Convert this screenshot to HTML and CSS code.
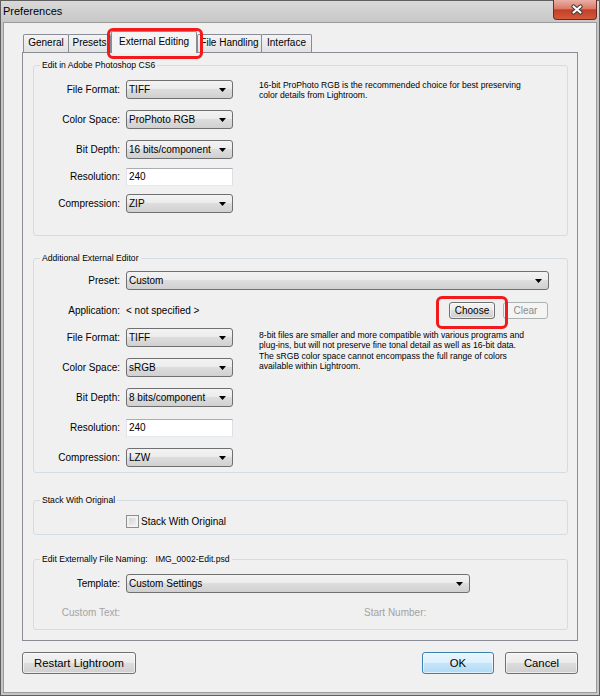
FILE: index.html
```
<!DOCTYPE html>
<html>
<head>
<meta charset="utf-8">
<title>Preferences</title>
<link rel="stylesheet" href="styles.css">
</head>
<body>
<div class="window">
  <div class="titlebar">
    <span class="title">Preferences</span>
    <div class="close-btn">
      <svg width="14" height="11" viewBox="0 0 14 11"><path d="M3.5 2.5 L10.5 8.5 M10.5 2.5 L3.5 8.5" stroke="#3b3b3b" stroke-width="4.2" stroke-linecap="round"/><path d="M3.5 2.5 L10.5 8.5 M10.5 2.5 L3.5 8.5" stroke="#ffffff" stroke-width="2.2" stroke-linecap="round"/></svg>
    </div>
  </div>
  <div class="client">
    <div class="tabs">
      <div class="tab t-general">General</div>
      <div class="tab t-presets">Presets</div>
      <div class="tab active t-external">External Editing<span class="mark mark-tab"></span></div>
      <div class="tab t-files">File Handling</div>
      <div class="tab t-interface">Interface</div>
    </div>
    <div class="panel">
      <fieldset class="group g-photoshop">
        <legend>Edit in Adobe Photoshop CS6</legend>
        <div class="cols">
          <div class="fields">
            <div class="row"><span class="lbl">File Format:</span><div class="select"><span class="val">TIFF</span><svg class="arrow" width="7" height="4" viewBox="0 0 7 4"><path d="M0 0 H7 L3.5 4 Z" fill="#000"/></svg></div></div>
            <div class="row"><span class="lbl">Color Space:</span><div class="select"><span class="val">ProPhoto RGB</span><svg class="arrow" width="7" height="4" viewBox="0 0 7 4"><path d="M0 0 H7 L3.5 4 Z" fill="#000"/></svg></div></div>
            <div class="row"><span class="lbl">Bit Depth:</span><div class="select"><span class="val">16 bits/component</span><svg class="arrow" width="7" height="4" viewBox="0 0 7 4"><path d="M0 0 H7 L3.5 4 Z" fill="#000"/></svg></div></div>
            <div class="row tight"><span class="lbl">Resolution:</span><div class="text-input">240</div></div>
            <div class="row tight"><span class="lbl">Compression:</span><div class="select"><span class="val">ZIP</span><svg class="arrow" width="7" height="4" viewBox="0 0 7 4"><path d="M0 0 H7 L3.5 4 Z" fill="#000"/></svg></div></div>
          </div>
          <p class="desc">16-bit ProPhoto RGB is the recommended choice for best preserving<br>color details from Lightroom.</p>
        </div>
      </fieldset>

      <fieldset class="group g-additional">
        <legend>Additional External Editor</legend>
        <div class="row"><span class="lbl">Preset:</span><div class="select preset"><span class="val">Custom</span><svg class="arrow" width="7" height="4" viewBox="0 0 7 4"><path d="M0 0 H7 L3.5 4 Z" fill="#000"/></svg></div></div>
        <div class="row app-row">
          <span class="lbl">Application:</span>
          <span class="app-value">&lt; not specified &gt;</span>
          <button class="btn btn-sm choose">Choose<span class="mark mark-choose"></span></button>
          <button class="btn btn-sm clear" disabled>Clear</button>
        </div>
        <div class="cols cols-2">
          <div class="fields">
            <div class="row"><span class="lbl">File Format:</span><div class="select"><span class="val">TIFF</span><svg class="arrow" width="7" height="4" viewBox="0 0 7 4"><path d="M0 0 H7 L3.5 4 Z" fill="#000"/></svg></div></div>
            <div class="row"><span class="lbl">Color Space:</span><div class="select"><span class="val">sRGB</span><svg class="arrow" width="7" height="4" viewBox="0 0 7 4"><path d="M0 0 H7 L3.5 4 Z" fill="#000"/></svg></div></div>
            <div class="row"><span class="lbl">Bit Depth:</span><div class="select"><span class="val">8 bits/component</span><svg class="arrow" width="7" height="4" viewBox="0 0 7 4"><path d="M0 0 H7 L3.5 4 Z" fill="#000"/></svg></div></div>
            <div class="row"><span class="lbl">Resolution:</span><div class="text-input">240</div></div>
            <div class="row"><span class="lbl">Compression:</span><div class="select"><span class="val">LZW</span><svg class="arrow" width="7" height="4" viewBox="0 0 7 4"><path d="M0 0 H7 L3.5 4 Z" fill="#000"/></svg></div></div>
          </div>
          <p class="desc desc-2">8-bit files are smaller and more compatible with various programs and<br>plug-ins, but will not preserve fine tonal detail as well as 16-bit data.<br>The sRGB color space cannot encompass the full range of colors<br>available within Lightroom.</p>
        </div>
      </fieldset>

      <fieldset class="group g-stack">
        <legend>Stack With Original</legend>
        <div class="check-row"><span class="checkbox"></span><span class="check-lbl">Stack With Original</span></div>
      </fieldset>

      <fieldset class="group g-naming">
        <legend>Edit Externally File Naming:<span class="fname">IMG_0002-Edit.psd</span></legend>
        <div class="row"><span class="lbl">Template:</span><div class="select template"><span class="val">Custom Settings</span><svg class="arrow" width="7" height="4" viewBox="0 0 7 4"><path d="M0 0 H7 L3.5 4 Z" fill="#000"/></svg></div></div>
        <div class="disabled-row"><span class="lbl">Custom Text:</span><span class="start-lbl">Start Number:</span></div>
      </fieldset>
    </div>
    <div class="footer">
      <button class="btn btn-lg restart">Restart Lightroom</button>
      <button class="btn btn-lg ok">OK</button>
      <button class="btn btn-lg cancel">Cancel</button>
    </div>
  </div>
</div>
</body>
</html>
```

FILE: styles.css
```
* { box-sizing: border-box; }
html, body { margin: 0; padding: 0; }
body {
  width: 600px;
  height: 696px;
  overflow: hidden;
  background: #ffffff;
  font-family: "Liberation Sans", Arial, sans-serif;
  font-size: 10px;
  color: #000;
}

.window {
  width: 600px;
  height: 696px;
  border: 1px solid #5f5f5f;
  background: #c5c5c5;
  display: flex;
  flex-direction: column;
}

.titlebar {
  height: 21px;
  display: flex;
  align-items: center;
  padding-left: 2px;
  background: linear-gradient(#d9d9d9, #c7c7c7);
}
.title {
  flex: 1;
  font-size: 11px;
  line-height: 21px;
}
.close-btn {
  align-self: flex-start;
  width: 44px;
  height: 20px;
  margin: -1px 2px 0 0;
  border: 1px solid #6d2a20;
  border-top: 0;
  border-radius: 0 0 4px 4px;
  background: linear-gradient(#eab0a6 0%, #dc7a66 45%, #c53f28 52%, #d2583c 100%);
  display: flex;
  align-items: center;
  justify-content: center;
  padding-left: 4px;
}

.client {
  margin: 0 2px;
  height: 671px;
  border: 1px solid #9b9b9b;
  background: #f0f0f0;
}

/* tabs */
.tabs {
  position: relative;
  z-index: 1;
  display: flex;
  align-items: flex-end;
  height: 22px;
  margin: 8px 0 -1px 19px;
}
.tab {
  height: 18px;
  margin-bottom: 1px;
  border: 1px solid #898c95;
  border-bottom: 0;
  border-radius: 2px 2px 0 0;
  background: linear-gradient(#f4f4f4, #e2e2e2);
  text-align: center;
  line-height: 16px;
  white-space: nowrap;
}
.tab.active {
  position: relative;
  height: 22px;
  margin-bottom: 0;
  background: #f4f4f4;
  line-height: 20px;
}
.t-general { width: 46px; }
.t-presets { width: 43px; margin-left: -1px; }
.t-external { width: 86px; }
.t-files { width: 65px; }
.t-interface { width: 51px; margin-left: -1px; }

/* annotation marks */
.mark {
  position: absolute;
  border: 3px solid #f21a1a;
  border-radius: 6px;
  pointer-events: none;
}
.mark-tab { left: -5px; top: -4px; width: 96px; height: 31px; }
.mark-choose { left: -14px; top: -7px; width: 72px; height: 33px; }

/* panel */
.panel {
  margin: 0 18px;
  border: 1px solid #898c95;
  background: #f0f0f0;
  padding: 7px 0 10px;
}

.group {
  margin: 0 9px 0 10px;
  padding: 0;
  min-width: 0;
  border: 1px solid #d3dce2;
  border-radius: 3px;
}
.group legend {
  font-size: 8.6px;
  line-height: 10px;
  padding: 0 2px;
  margin-left: 6px;
  white-space: nowrap;
}
.fname { margin-left: 8px; }

.g-photoshop { padding: 10px 0 22px; }
.g-additional { margin-top: 17px; padding: 8px 18px 5px 0; }
.g-stack { margin-top: 22px; padding: 10px 0 6px; }
.g-naming { margin-top: 19px; padding: 10px 0 10px; }

.cols { display: flex; align-items: flex-start; }
.cols-2 { margin-top: 9px; }
.fields { display: flex; flex-direction: column; }

.row {
  display: flex;
  align-items: center;
  height: 19px;
}
.fields .row + .row { margin-top: 11px; }
.fields .row.tight { margin-top: 8px; }

.lbl {
  width: 86px;
  margin-right: 6px;
  text-align: right;
  white-space: nowrap;
  flex: none;
}

.select {
  width: 107px;
  height: 19px;
  border: 1px solid #707070;
  border-radius: 3px;
  background: linear-gradient(#f3f3f3 0%, #ebebeb 49%, #dddddd 50%, #d0d0d0 100%);
  padding-left: 2px;
  display: flex;
  align-items: center;
  flex: none;
}
.select .val { flex: 1; white-space: nowrap; }
.select .arrow { margin-right: 6px; flex: none; }
.select.preset { width: 423px; }
.select.template { width: 344px; }

.text-input {
  width: 107px;
  height: 18px;
  border: 1px solid;
  border-color: #abadb3 #dbdfe6 #e3e9ef #e2e3ea;
  background: #ffffff;
  padding-left: 2px;
  line-height: 16px;
  flex: none;
}

.desc {
  margin: 0 0 0 26px;
  font-size: 8.6px;
  line-height: 10.4px;
  white-space: nowrap;
}
.desc-2 { margin-top: 2px; }

.app-row { margin-top: 12px; height: 17px; }
.app-value { flex: 1; white-space: nowrap; }

.btn {
  font-family: inherit;
  color: #000;
  padding: 0;
  border: 1px solid #707070;
  border-radius: 3px;
  background: linear-gradient(#f3f3f3 0%, #ebebeb 49%, #dddddd 50%, #cfcfcf 100%);
  box-shadow: inset 0 0 0 1px rgba(255, 255, 255, 0.6);
  text-align: center;
  white-space: nowrap;
}
.btn-sm { height: 17px; font-size: 10px; line-height: 15px; }
.choose { position: relative; width: 46px; }
.clear {
  width: 45px;
  margin-left: 8px;
  margin-right: 1px;
  border-color: #adb2b5;
  background: #f4f4f4;
  color: #8a8a8a;
  box-shadow: none;
}

.check-row {
  display: flex;
  align-items: center;
  height: 13px;
  margin-left: 92px;
}
.checkbox {
  width: 13px;
  height: 13px;
  border: 1px solid #8e8f8f;
  background: linear-gradient(135deg, #cfcfcf, #f5f5f5);
  box-shadow: inset 0 0 0 2px #f2f2f2;
  flex: none;
}
.check-lbl { margin-left: 2px; white-space: nowrap; }

.disabled-row {
  display: flex;
  align-items: center;
  height: 13px;
  margin-top: 13px;
  color: #a3a3a3;
}
.start-lbl { margin-left: 238px; white-space: nowrap; }

.footer {
  display: flex;
  margin: 11px 18px 0;
}
.btn-lg { height: 22px; font-size: 11.3px; line-height: 20px; }
.restart { width: 114px; }
.ok {
  width: 72px;
  margin-left: auto;
  border-color: #3c7fb1;
  background: linear-gradient(#eaf6fd 0%, #dbf0fc 49%, #c4e6fb 50%, #b1daf4 100%);
}
.cancel { width: 73px; margin-left: 11px; }
```
